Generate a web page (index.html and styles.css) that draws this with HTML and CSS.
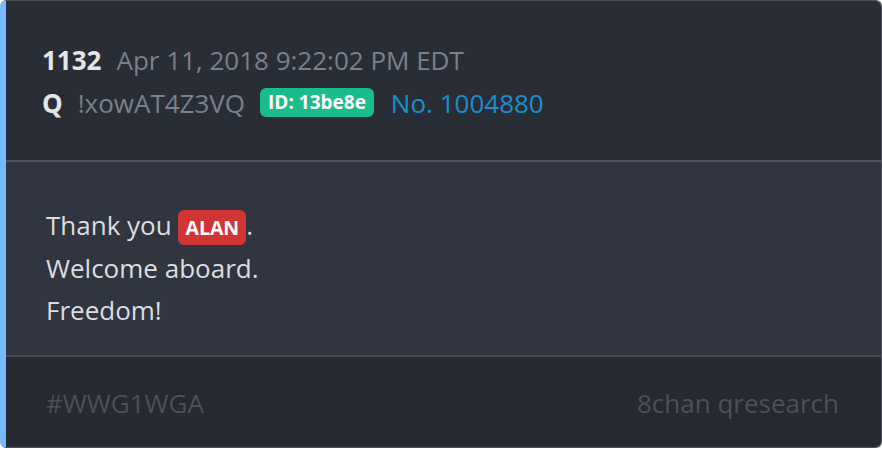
FILE: index.html
```html
<!DOCTYPE html>
<html lang="en">

<head>
    <meta charset="UTF-8">
    <meta name="viewport" content="width=device-width, initial-scale=1.0">
    <title>Post 1132</title>
    <link rel="stylesheet" href="styles.css">
</head>

<body>
    <div class="post">
        <header class="post-header">
            <div class="line">
                <span class="num">1132</span>
                <span class="muted">Apr 11, 2018 9:22:02 PM EDT</span>
            </div>
            <div class="line">
                <span class="num">Q</span>
                <span class="muted">!xowAT4Z3VQ</span>
                <span class="id-badge">ID: 13be8e</span>
                <span class="post-no">No. 1004880</span>
            </div>
        </header>
        <div class="post-body">
            <p>Thank you <span class="name-badge">ALAN</span>.</p>
            <p>Welcome aboard.</p>
            <p>Freedom!</p>
        </div>
        <footer class="post-footer">
            <span>#WWG1WGA</span>
            <span>8chan qresearch</span>
        </footer>
    </div>
</body>

</html>
```

FILE: styles.css
```css
body {
    margin: 0;
    padding: 0;
    background-color: #fff;
    font-family: 'Open Sans', sans-serif;
    font-size: 26px;
}

.post {
    height: 446px;
    border: 1px solid #4d525c;
    border-left: 6px solid #78b8ff;
    border-radius: 6px;
    overflow: hidden;
    display: flex;
    flex-direction: column;
}

.post-header {
    background-color: #292d36;
    padding: 37px 40px 36px 36px;
    border-bottom: 2px solid #4d525c;
}

.line {
    display: flex;
    align-items: center;
    height: 43px;
}

.num {
    color: #e4e5e7;
    font-weight: bold;
    margin-right: 15px;
}

.muted {
    color: #7b808b;
    margin-right: 15px;
}

.id-badge {
    background-color: #1abc8c;
    color: #fff;
    font-weight: bold;
    font-size: 19px;
    padding: 0 8px;
    height: 29px;
    line-height: 29px;
    border-radius: 6px;
    margin-right: 17px;
}

.post-no {
    color: #1b8ed0;
}

.post-body {
    background-color: #30353f;
    color: #dcdde0;
    padding: 42px 40px 23px 40px;
    border-bottom: 2px solid #454a54;
    flex: none;
}

.post-body p {
    margin: 0;
    line-height: 42.5px;
}

.name-badge {
    background-color: #d13434;
    color: #fff;
    font-weight: bold;
    font-size: 19.5px;
    line-height: 1;
    padding: 4px 7px;
    border-radius: 6px;
}

.post-footer {
    flex: 1;
    background-color: #262930;
    color: #4b505b;
    padding: 2px 42px 0 40px;
    display: flex;
    justify-content: space-between;
    align-items: center;
}
```
